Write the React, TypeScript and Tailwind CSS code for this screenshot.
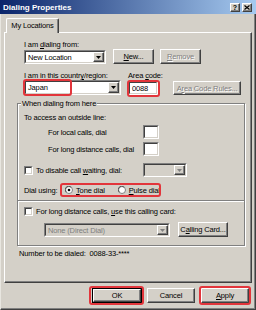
import React from "react";

const raised =
  "border border-t-white border-l-white border-r-[#404040] border-b-[#404040] shadow-[inset_-1px_-1px_0_#808080] bg-[#d4d0c8]";
const disabledText = "text-[#808080] [text-shadow:1px_1px_0_#ffffff]";

function Btn({
  className,
  children,
  disabled,
}: {
  className: string;
  children: React.ReactNode;
  disabled?: boolean;
}) {
  return (
    <div
      className={`${raised} ${className} flex items-center justify-center ${
        disabled ? disabledText : ""
      }`}
    >
      {children}
    </div>
  );
}

function Sunken({
  className,
  children,
  disabled,
}: {
  className: string;
  children?: React.ReactNode;
  disabled?: boolean;
}) {
  return (
    <div
      className={`${className} border border-t-[#808080] border-l-[#808080] border-r-white border-b-white`}
    >
      <div
        className={`w-full h-full border border-t-[#404040] border-l-[#404040] border-r-[#d4d0c8] border-b-[#d4d0c8] flex items-stretch ${
          disabled ? "bg-[#d4d0c8]" : "bg-white"
        }`}
      >
        {children}
      </div>
    </div>
  );
}

function Arrow({ disabled }: { disabled?: boolean }) {
  return (
    <div className={`${raised} w-[11px] flex items-center justify-center`}>
      <svg width="5" height="3" viewBox="0 0 5 3">
        <polygon points="0,0 5,0 2.5,3" fill={disabled ? "#808080" : "#000"} />
      </svg>
    </div>
  );
}

function Combo({
  className,
  text,
  disabled,
}: {
  className: string;
  text?: string;
  disabled?: boolean;
}) {
  return (
    <Sunken className={className} disabled={disabled}>
      <div
        className={`flex-1 flex items-center pl-[2px] overflow-hidden whitespace-nowrap ${
          disabled ? "text-[#808080]" : ""
        }`}
      >
        {text}
      </div>
      <Arrow disabled={disabled} />
    </Sunken>
  );
}

function Check() {
  return (
    <Sunken className="w-[9px] h-[9px] shrink-0" />
  );
}

function Radio({ checked }: { checked?: boolean }) {
  return (
    <svg width="8" height="8" viewBox="0 0 8 8" className="shrink-0">
      <circle cx="4" cy="4" r="3.5" fill="#ffffff" stroke="#808080" strokeWidth="1" />
      <path d="M1.2 6.2 A3 3 0 0 1 6.2 1.2" fill="none" stroke="#404040" strokeWidth="0.8" />
      {checked && <circle cx="4" cy="4" r="1.3" fill="#000000" />}
    </svg>
  );
}

function Red({ className }: { className: string }) {
  return (
    <div
      className={`absolute ${className} border-2 border-[#e2353b] rounded-[3px] pointer-events-none`}
    />
  );
}

export default function App() {
  return (
    <div className="w-[256px] h-[310px] bg-[#d4d0c8] flex flex-col overflow-hidden font-['Liberation_Sans',Arial,sans-serif] text-[7.5px] leading-[9px] tracking-[-0.15px] text-black">
      {/* Title bar */}
      <div className="h-[14px] shrink-0 flex items-center pl-[3px] pr-[4px] bg-[linear-gradient(to_right,#0a246a,#a6caf0)]">
        <span className="text-white font-bold text-[8px] tracking-normal">
          Dialing Properties
        </span>
        <div className="ml-auto flex gap-[2px]">
          <div className={`${raised} w-[10px] h-[9px] flex items-center justify-center`}>
            <span className="font-bold text-[7px] leading-[7px] tracking-normal">?</span>
          </div>
          <div className={`${raised} w-[10px] h-[9px] flex items-center justify-center`}>
            <svg width="6" height="5" viewBox="0 0 6 5">
              <path d="M0.5 0.5 L5.5 4.5 M5.5 0.5 L0.5 4.5" stroke="#000" strokeWidth="1.2" />
            </svg>
          </div>
        </div>
      </div>

      {/* Body */}
      <div className="flex-1 flex flex-col border-l border-l-[#e8e6e0] border-r border-r-[#404040] border-b border-b-[#404040] shadow-[inset_-1px_-1px_0_#808080]">
        <div className="pt-[4px] pl-[5px] flex">
          <div className="relative z-10 -mb-px h-[15px] w-[53px] bg-[#d4d0c8] border-t border-l border-t-white border-l-white border-r border-r-[#404040] shadow-[inset_-1px_0_0_#808080] rounded-t-[2px] flex items-center justify-center pb-[1px]">
            My Locations
          </div>
        </div>

        {/* Tab panel */}
        <div className={`${raised} ml-[3px] w-[248px] h-[251px] flex flex-col`}>
          <div className="ml-[19px] mt-[7px] h-[9px] flex items-center">
            I am <span className="ml-[2px]"><u>d</u>ialing from:</span>
          </div>
          <div className="ml-[19px] h-[15px] flex items-start">
            <Combo className="w-[82px] h-[14px] mt-[1px]" text="New Location" />
            <Btn className="ml-[7px] w-[41px] h-[15px]">
              <u>N</u>ew...
            </Btn>
            <Btn className="ml-[6px] w-[41px] h-[15px]" disabled>
              <u>R</u>emove
            </Btn>
          </div>

          <div className="ml-[19px] mt-[7px] h-[9px] flex items-center">
            <span className="w-[104px]">I am in this countr<u>y</u>/region:</span>
            <span>Area <u>c</u>ode:</span>
          </div>
          <div className="ml-[19px] h-[16px] flex items-start">
            <div className="relative">
              <Combo className="w-[97px] h-[15px]" text="Japan" />
              <Red className="-left-[1px] -top-px w-[49px] h-[17px]" />
            </div>
            <div className="relative ml-[7px] mt-[1px]">
              <Sunken className="w-[30px] h-[14px]">
                <div className="flex items-center pl-[2px]">0088</div>
              </Sunken>
              <Red className="-left-[1px] -top-[1px] w-[33px] h-[17px]" />
            </div>
            <Btn className="ml-[15px] mt-[1px] w-[68px] h-[14px]" disabled>
              A<u>r</u>ea Code Rules...
            </Btn>
          </div>

          {/* Group box */}
          <div className="relative ml-[12px] mt-[7px] w-[228px] h-[143px] border border-[#808080] shadow-[1px_1px_0_#ffffff,inset_1px_1px_0_#ffffff] flex flex-col">
            <span className="absolute left-[3px] -top-[5px] px-[1px] bg-[#d4d0c8] h-[9px] leading-[9px]">
              When dialing from here
            </span>
            <div className="ml-[6px] mt-[9px] h-[9px] flex items-center">
              To access an outside line:
            </div>
            <div className="ml-[30px] mt-[3px] h-[14px] flex items-center">
              <span className="w-[95px]">For local calls, dial</span>
              <Sunken className="w-[16px] h-[14px]" />
            </div>
            <div className="ml-[30px] mt-[3px] h-[14px] flex items-center">
              <span className="w-[95px]">For long distance calls, dial</span>
              <Sunken className="w-[16px] h-[14px]" />
            </div>
            <div className="ml-[6px] mt-[7px] h-[14px] flex items-center">
              <Check />
              <span className="ml-[3px] w-[107px]">
                To disable call <u>w</u>aiting, dial:
              </span>
              <Combo className="w-[44px] h-[14px]" disabled />
            </div>
            <div className="ml-[6px] mt-[6px] h-[14px] flex items-center">
              <span className="w-[36px]">Dial using:</span>
              <div className="relative h-[14px] w-[101px] flex items-center">
                <div className="ml-[5px] flex items-center">
                  <Radio checked />
                  <span className="ml-[3px]">
                    <u>T</u>one dial
                  </span>
                </div>
                <div className="ml-[13px] flex items-center">
                  <Radio />
                  <span className="ml-[3px]">
                    <u>P</u>ulse dial
                  </span>
                </div>
                <Red className="left-0 top-0 w-[101px] h-[14px]" />
              </div>
            </div>
            <div className="mt-[3px] h-[2px] border-t border-t-[#808080] border-b border-b-white" />
            <div className="ml-[6px] mt-[4px] h-[11px] flex items-center">
              <Check />
              <span className="ml-[3px]">
                For long distance calls, <u>u</u>se this calling card:
              </span>
            </div>
            <div className="ml-[26px] mt-[5px] h-[15px] flex items-start">
              <Combo className="w-[126px] h-[14px] mt-[1px]" text="None (Direct Dial)" disabled />
              <Btn className="ml-[8px] w-[50px] h-[15px]">
                C<u>a</u>lling Card...
              </Btn>
            </div>
          </div>

          <div className="ml-[14px] mt-[3px] h-[9px] flex items-center">
            Number to be dialed:&nbsp;&nbsp;0088-33-****
          </div>
        </div>

        {/* Bottom buttons */}
        <div className="mt-[5px] ml-[91px] flex items-start">
          <div className="relative">
            <div className="w-[50px] h-[15px] border border-black">
              <Btn className="w-full h-full">OK</Btn>
            </div>
            <Red className="-left-[3px] -top-[2px] w-[55px] h-[19px]" />
          </div>
          <Btn className="ml-[5px] w-[48px] h-[15px]">Cancel</Btn>
          <div className="relative ml-[6px]">
            <Btn className="w-[48px] h-[15px]">
              <u>A</u>pply
            </Btn>
            <Red className="-left-[2px] -top-[2px] w-[52px] h-[19px]" />
          </div>
        </div>
      </div>
    </div>
  );
}
